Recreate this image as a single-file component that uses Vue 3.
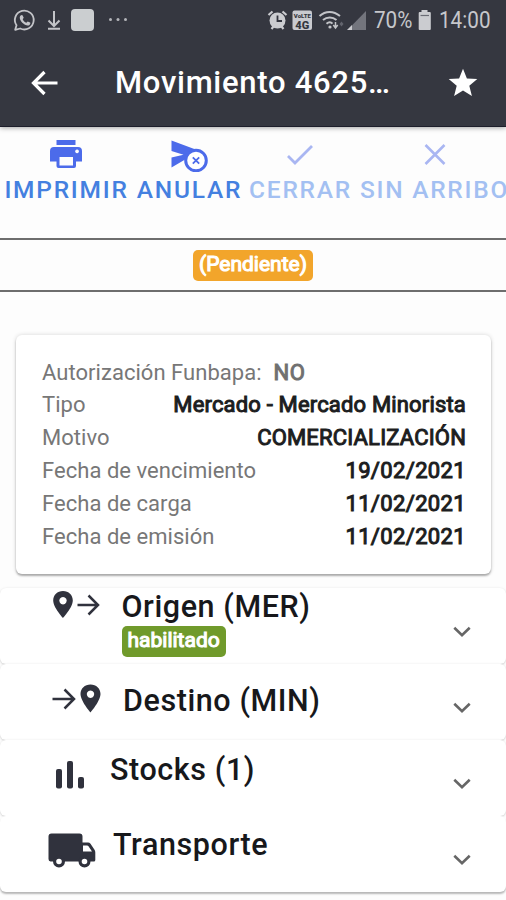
<script setup>
const actions = [
  { id: 'print', label: 'IMPRIMIR' },
  { id: 'cancel', label: 'ANULAR' },
  { id: 'close', label: 'CERRAR', disabled: true },
  { id: 'none', label: 'SIN ARRIBO', disabled: true },
]
const details = [
  { label: 'Tipo', value: 'Mercado - Mercado Minorista', kind: 'tight' },
  { label: 'Motivo', value: 'COMERCIALIZACIÓN', kind: 'tight' },
  { label: 'Fecha de vencimiento', value: '19/02/2021', kind: 'date' },
  { label: 'Fecha de carga', value: '11/02/2021', kind: 'date' },
  { label: 'Fecha de emisión', value: '11/02/2021', kind: 'date' },
]
const panels = [
  { id: 'origin', title: 'Origen (MER)', tag: 'habilitado' },
  { id: 'target', title: 'Destino (MIN)' },
  { id: 'stocks', title: 'Stocks (1)' },
  { id: 'truck', title: 'Transporte' },
]
</script>

<template>
  <div class="screen">
    <header class="top">
      <div class="status">
        <svg class="s-left" width="140" height="40" viewBox="0 0 140 40">
          <g fill="none" stroke="#c3c4c8" stroke-width="1.8">
            <path d="M15.2 29.8l1.3-4.5a9.4 9.4 0 1 1 3.7 3.2z" stroke-linejoin="round" />
            <path d="M54 11v14.500M48.500 20.500L54 26l5.500-5.500M48 28.800h12" stroke-width="2" />
          </g>
          <path d="M20.600 15.600c1-1 2-.6 2.300.3l.8 1.900-1 1.400c.8 1.700 2 2.800 3.700 3.500l1.300-1.300 2.400 1.200c.6.3.2 1.700-.6 2.300-1.800 1.300-5 0-7.200-2.200-2.300-2.300-3.400-5.300-1.700-7.100z" fill="#c3c4c8" />
          <rect x="71" y="9" width="23" height="22" rx="4" fill="#cbced0" />
          <g fill="#b4b5ba"><circle cx="110.500" cy="19.500" r="1.500" /><circle cx="118" cy="19.500" r="1.500" /><circle cx="125.500" cy="19.500" r="1.500" /></g>
        </svg>
        <svg class="s-right" width="102" height="40" viewBox="266 0 102 40">
          <circle cx="277.500" cy="20.500" r="8" fill="#cbccd0" />
          <path d="M268.500 15l4-3.500M286.500 15l-4-3.500M271.500 29l2-2.500M283.500 29l-2-2.500" stroke="#cbccd0" stroke-width="2.200" fill="none" />
          <path d="M277.500 15.500v5.500h4.500" stroke="#33353f" stroke-width="1.800" fill="none" />
          <rect x="292.500" y="10.500" width="19.500" height="19.500" rx="2" fill="#c9cacf" />
          <text x="302.300" y="17.800" class="volte small">VoLTE</text>
          <text x="302.300" y="28.600" class="volte">4G</text>
          <g fill="none" stroke="#c3c4c8" stroke-width="2">
            <path d="M319.500 16c6-5.500 14-5.500 20.500 0" /><path d="M323 20c4-3.500 9.500-3.500 13.500 0" /><path d="M326.500 23.700c2-1.700 4.500-1.700 6 0" />
          </g>
          <circle cx="330" cy="27" r="1.600" fill="#c3c4c8" />
          <path d="M335.500 22v5m-2.200-2l2.200 3 2.200-3" stroke="#c3c4c8" stroke-width="1.500" fill="none" />
          <path d="M339.500 24l2-2.500 2 2.500-2 2.500z" fill="#62646d" />
          <path d="M366 11v19h-18.500z" fill="#73757d" /><path d="M352 25v5h-5z" fill="#cbccd0" />
        </svg>
        <span class="pct"><span class="narrow">70%</span></span>
        <svg class="bat" width="14" height="40" viewBox="0 0 14 40"><path d="M3.500 10h6v2h2.300q1 0 1 1V29q0 1-1 1H1.700q-1 0-1-1V13q0-1 1-1h1.800z" fill="#cbccd0" /><path d="M2.500 15.500h8.500" stroke="#6b6d76" stroke-width="1.200" /></svg>
        <span class="clock"><span class="narrow">14:00</span></span>
      </div>
      <div class="toolbar">
        <svg class="back" width="28" height="28" viewBox="0 0 28 28"><path d="M26.500 14H3M13.500 3L2.500 14l11 11" fill="none" stroke="#fff" stroke-width="3.200" /></svg>
        <h1>Movimiento 4625…</h1>
        <svg class="star" width="30" height="30" viewBox="0 0 30 30"><path d="M15 .7l3.900 9.700 10.400.7-8 6.700 2.600 10.200L15 22.500 6.100 28l2.600-10.200-8-6.700 10.400-.7z" fill="#fff" /></svg>
      </div>
    </header>

    <nav class="actions">
      <button v-for="a in actions" :key="a.id" :class="['action', a.id, { off: a.disabled }]">
        <svg v-if="a.id === 'print'" width="34" height="34" viewBox="0 0 34 34">
          <path d="M7.500 2h19v5h-19z" fill="#4c6bea" /><path fill-rule="evenodd" d="M5 9h24q4 0 4 4v10.500h-6V28q0 2-2 2H9.500q-2 0-2-2v-4.500H1V13q0-4 4-4zm5.500 10v8.500h13.500V19zM28 11.400a1.900 1.900 0 1 0 .1 0z" fill="#4c6bea" />
        </svg>
        <svg v-else-if="a.id === 'cancel'" width="38" height="34" viewBox="0 0 38 34">
          <path d="M1.500 2.500L27 12l-3 5-8 4-14.500 8.500V19.500l12-2.700L1.500 13z" fill="#4c6bea" />
          <circle cx="26" cy="22.500" r="10.300" fill="#fff" stroke="#4c6bea" stroke-width="3" />
          <path d="M22.800 19.300l6.400 6.400m0-6.400l-6.400 6.400" stroke="#4c6bea" stroke-width="1.800" />
        </svg>
        <svg v-else-if="a.id === 'close'" width="30" height="34" viewBox="0 0 30 34"><path d="M3 18l7 7L27 8" fill="none" stroke="#a9b6f2" stroke-width="2.800" /></svg>
        <svg v-else width="30" height="34" viewBox="0 0 30 34"><path d="M6.500 7l19 19m0-19l-19 19" fill="none" stroke="#a9b6f2" stroke-width="2.600" /></svg>
        <span class="t">{{ a.label }}</span>
      </button>
    </nav>

    <div class="state"><span class="badge orange">(Pendiente)</span></div>

    <section class="card">
      <p class="row auth"><span>Autorización Funbapa:</span><b>NO</b></p>
      <p v-for="d in details" :key="d.label" class="row"><span>{{ d.label }}</span><b :class="d.kind">{{ d.value }}</b></p>
    </section>

    <section class="panels">
      <article v-for="p in panels" :key="p.id" :class="['panel', p.id]">
        <svg class="icon" v-if="p.id === 'origin'" width="56" height="36" viewBox="48 586 56 36">
          <path fill-rule="evenodd" d="M63 591c5.700 0 9.800 4 9.800 9.600 0 7-9.800 17.400-9.800 17.400s-9.800-10.400-9.800-17.400c0-5.600 4.100-9.600 9.800-9.600zm0 6a3.700 3.700 0 1 0 .01 0z" fill="#30323d" />
          <path d="M77.500 605h20M88.500 595.500l9.500 9.500-9.500 9.500" fill="none" stroke="#30323d" stroke-width="2.500" />
        </svg>
        <svg class="icon" v-else-if="p.id === 'target'" width="56" height="36" viewBox="48 680 56 36">
          <path fill-rule="evenodd" d="M90.500 684.500c5.700 0 10 4 10 9.600 0 7-10 18.400-10 18.400s-10-11.400-10-18.400c0-5.600 4.300-9.600 10-9.600zm0 6a3.700 3.700 0 1 0 .01 0z" fill="#30323d" />
          <path d="M52.500 699h21M64.500 689.500L74 699l-9.500 9.500" fill="none" stroke="#30323d" stroke-width="2.500" />
        </svg>
        <svg class="icon" v-else-if="p.id === 'stocks'" width="56" height="36" viewBox="48 756 56 36"><g fill="#30323d"><rect x="56" y="769" width="6" height="19.500" rx="2" /><rect x="67" y="761" width="6" height="27.500" rx="2" /><rect x="78" y="777" width="6" height="11.500" rx="2" /></g></svg>
        <svg class="icon" v-else width="56" height="40" viewBox="44 830 56 40">
          <path fill-rule="evenodd" d="M51.500 833.500h28q3 0 3 3v6h5.500q1.500 0 2.500 1.300l4 6q.8 1.200.8 2.700v7.500q0 1.500-1.500 1.500H50.500q-2-.3-2-2.500v-22.500q0-3 3-3zm31.500 12v6h9l-3.500-5.300q-.5-.7-1.500-.7z" fill="#30323d" />
          <g fill="#fff" stroke="#30323d" stroke-width="3.200"><circle cx="59" cy="861.500" r="4.400" /><circle cx="84.500" cy="861.500" r="4.400" /></g>
        </svg>
        <div class="head"><h2>{{ p.title }}</h2><span v-if="p.tag" class="badge green">{{ p.tag }}</span></div>
        <svg class="chev" width="20" height="14" viewBox="0 0 20 14"><path d="M2.300 2.800L10 10.300l7.700-7.500" fill="none" stroke="#666" stroke-width="2.600" /></svg>
      </article>
    </section>
  </div>
</template>

<style>
html, body { margin: 0; background: #fdfdfd; overflow: hidden; }
</style>

<style scoped>
.screen { width: 506px; height: 900px; overflow: hidden; background: #fdfdfd; font-family: Roboto, "Liberation Sans", sans-serif; color: #17181b; }
.top { height: 127px; background: #353740; border-bottom: 1px solid #1d1e2b; box-sizing: border-box; box-shadow: 0 1px 5px rgba(0,0,0,.35); position: relative; z-index: 1; }
.status { height: 40px; display: flex; color: #c6c7cb; font-size: 23.500px; line-height: 41px; }
.s-left, .s-right, .bat { flex: none; }
.s-right { margin-left: 126px; }
.volte { font: 900 11px/1 Roboto, sans-serif; fill: #353740; text-anchor: middle; }
.volte.small { font-size: 6px; }
.pct { width: 39px; margin-left: 6px; }
.bat { margin-left: 5px; }
.clock { margin-left: 7px; }
.narrow { display: inline-block; transform: scaleX(.88); transform-origin: left; }
.toolbar { height: 86px; display: flex; align-items: center; padding: 0 28px 0 31px; }
h1 { margin: 0 0 1px; flex: 1; padding-left: 56px; font-size: 31px; line-height: 40px; font-weight: 500; letter-spacing: .72px; color: #fff; white-space: nowrap; }
.actions { height: 111px; display: flex; width: 520px; background: #fdfdfd; }
.action { flex: none; border: 0; background: none; padding: 10px 0 0; display: flex; flex-direction: column; align-items: center; font: 500 24.500px/28px Roboto, sans-serif; color: #4480e0; letter-spacing: 1.750px; white-space: nowrap; }
.action svg { margin-top: 1px; }
.action .t { margin-top: 4px; margin-right: -1px; }
.off { color: #a3c0f2; }
.print { width: 132px; }
.cancel { width: 114px; }
.close { width: 108px; }
.none { width: 160px; }
.state { height: 54px; box-sizing: border-box; border-top: 2px solid #6e6e6e; border-bottom: 2px solid #6e6e6e; display: flex; justify-content: center; padding-top: 10px; }
.badge { display: block; width: max-content; height: 31px; box-sizing: border-box; border-radius: 5px; color: #fff; font-size: 21px; line-height: 29px; font-weight: 400; -webkit-text-stroke: 1.100px #fff; }
.orange { background: #f2a52b; padding: 0 6px; }
.green { background: #709a2b; padding: 0 6px; }
.card { margin: 43px 15px 0 16px; height: 239px; box-sizing: border-box; padding: 20.500px 25px 0 26px; background: #fff; border-radius: 6px; box-shadow: 0 2px 2px rgba(0,0,0,.28), 0 0 4px rgba(0,0,0,.16); }
.row { margin: 0; height: 32.900px; display: flex; justify-content: space-between; font-size: 22px; letter-spacing: .04px; line-height: 33px; color: #777; white-space: nowrap; }
.row b { font-weight: 400; letter-spacing: .35px; color: #1c1d20; -webkit-text-stroke: 1px #1c1d20; }
.row b.tight { letter-spacing: .17px; }
.row.auth { justify-content: flex-start; gap: 12px; }
.row.auth b { color: #707070; -webkit-text-stroke-color: #707070; }
.panels { margin-top: 14px; }
.panel { height: 76px; box-sizing: border-box; background: #fff; display: flex; align-items: flex-start; border-radius: 6px; box-shadow: 0 1px 2px rgba(0,0,0,.15), 0 0 3px rgba(0,0,0,.06); padding-right: 34px; }
.icon { margin-left: 48px; flex: none; }
.head { flex: 1; }
h2 { margin: 0; font-size: 30.500px; line-height: 38px; font-weight: 500; letter-spacing: .58px; white-space: nowrap; color: #17181b; }
.chev { margin-top: 37px; }
.origin .icon { margin-top: -2px; }
.origin .head { padding-left: 17.500px; }
.target .icon { margin-top: 16px; }
.target .head { padding: 17.500px 0 0 19px; }
.stocks .icon { margin-top: 16px; }
.stocks .head { padding: 11px 0 0 6px; }
.truck { box-shadow: 0 2px 2px rgba(0,0,0,.28); }
.truck .icon { margin: 14px 0 0 44px; }
.truck .head { padding: 9.500px 0 0 13px; }
</style>
